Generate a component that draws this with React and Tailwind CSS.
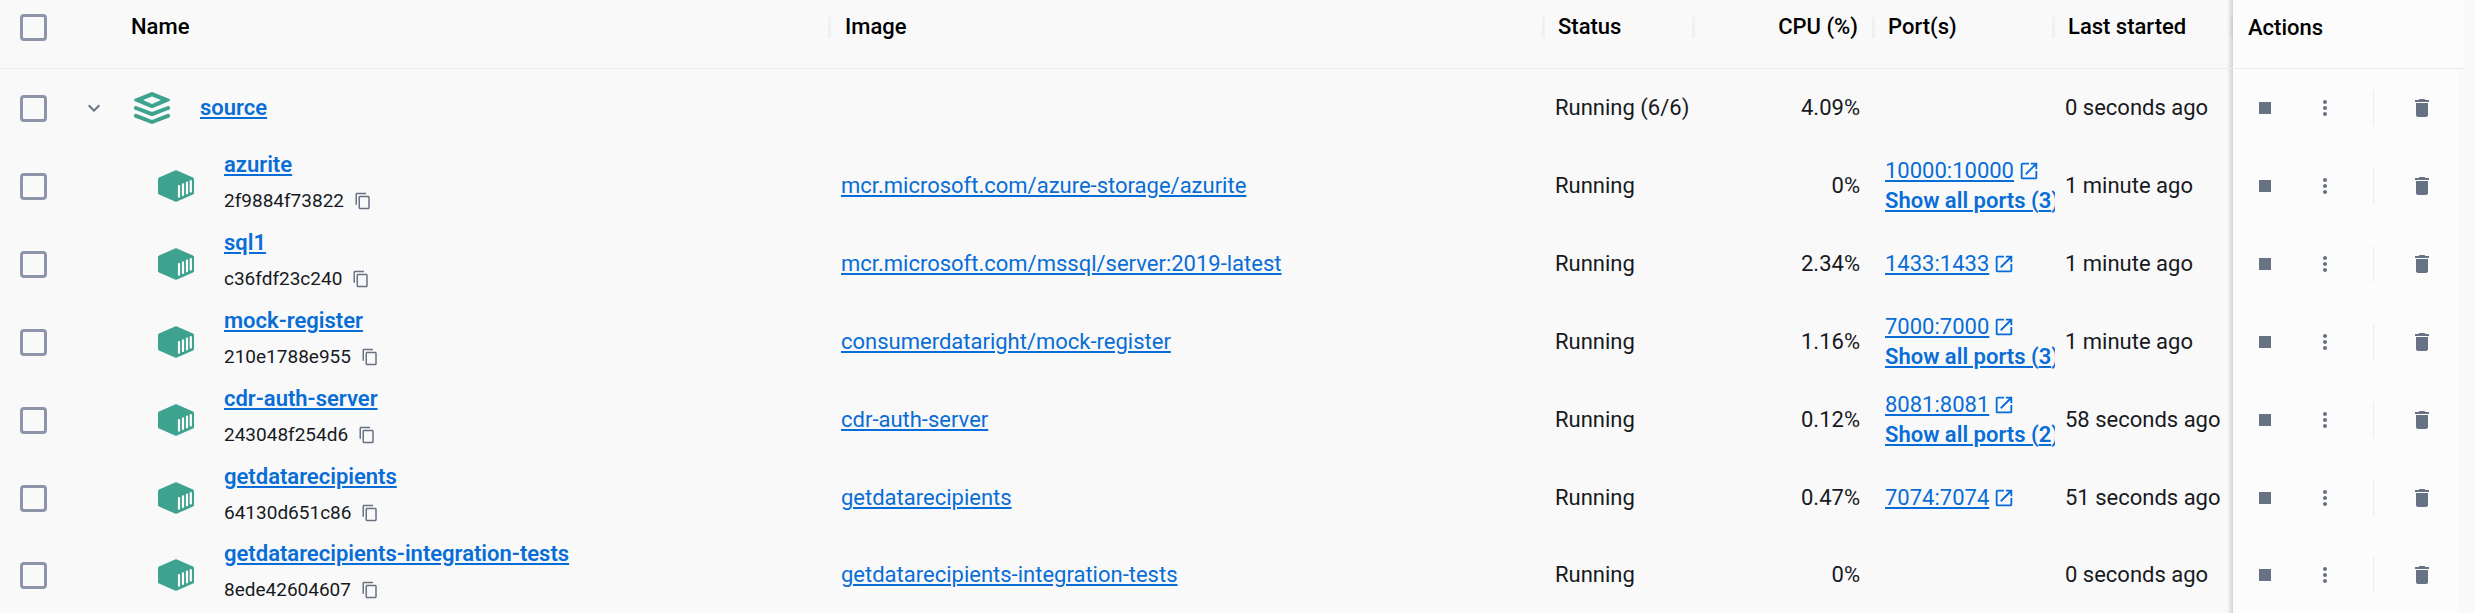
import { MdContentCopy, MdDelete, MdExpandMore, MdMoreVert, MdOpenInNew, MdStop } from "react-icons/md";

const containers = [
  { name: "azurite", id: "2f9884f73822", image: "mcr.microsoft.com/azure-storage/azurite", cpu: "0%", port: "10000:10000", more: 3, started: "1 minute ago" },
  { name: "sql1", id: "c36fdf23c240", image: "mcr.microsoft.com/mssql/server:2019-latest", cpu: "2.34%", port: "1433:1433", started: "1 minute ago" },
  { name: "mock-register", id: "210e1788e955", image: "consumerdataright/mock-register", cpu: "1.16%", port: "7000:7000", more: 3, started: "1 minute ago" },
  { name: "cdr-auth-server", id: "243048f254d6", image: "cdr-auth-server", cpu: "0.12%", port: "8081:8081", more: 2, started: "58 seconds ago" },
  { name: "getdatarecipients", id: "64130d651c86", image: "getdatarecipients", cpu: "0.47%", port: "7074:7074", started: "51 seconds ago" },
  { name: "getdatarecipients-integration-tests", id: "8ede42604607", image: "getdatarecipients-integration-tests", cpu: "0%", started: "0 seconds ago" },
];

function StackIcon() {
  return (
    <svg viewBox="0 0 36 32" className="h-8 w-9 shrink-0 text-[#3da28e]" aria-hidden="true">
      <path
        fill="currentColor"
        fillRule="evenodd"
        d="M16.6.4q1.4-.6 2.8 0L35 6.8q2 1.2 0 2.4l-15.600 6.600q-1.400.6-2.800 0L1 9.200q-2-1.200 0-2.400ZM18 4.600 9 8l9 4 9-4Z"
      />
      <path
        fill="none"
        stroke="currentColor"
        strokeWidth="4"
        strokeLinejoin="round"
        strokeLinecap="round"
        d="M2 16l16 6.200L34 16M2 23.800 18 30l16-6.200"
      />
    </svg>
  );
}

function ContainerIcon() {
  return (
    <svg viewBox="0 0 36 32" className="h-8 w-9 shrink-0" aria-hidden="true">
      <path fill="#3da28e" d="M17 .4q1-.5 2 0l16 7q1 .5 1 1.500v14.200q0 1-1 1.500l-16 7q-1 .5-2 0l-16-7q-1-.5-1-1.500V8.900q0-1 1-1.500Z" />
      <path stroke="#fff" strokeWidth="2.200" strokeLinecap="round" d="M21 16v10.700M25 14.300V25M29 12.600v10.700M32.800 11v10.600" />
    </svg>
  );
}

function Check({ label }) {
  return (
    <input
      type="checkbox"
      aria-label={label}
      className="ml-5 block h-[27px] w-[27px] appearance-none rounded-[4px] border-3 border-[#8c95a9] checked:bg-[#8c95a9]"
    />
  );
}

function Head({ children, className = "" }) {
  return (
    <th scope="col" className="border-b border-[#ececee] p-0 pb-3.5 font-medium">
      <div className={`flex h-[21px] items-center border-r-3 border-[#eff0f2] ${className}`}>{children}</div>
    </th>
  );
}

const panel =
  "relative bg-[#fcfcfc] p-0 before:absolute before:inset-y-0 before:right-full before:w-1.5 before:bg-linear-to-l before:from-black/15 before:to-transparent";

function Actions({ name }) {
  return (
    <>
      <td className={panel}>
        <div className="flex items-center pl-5 text-2xl text-[#677285]">
          <button type="button" aria-label={`Stop ${name}`}><MdStop /></button>
          <button type="button" aria-label={`More actions for ${name}`} className="ml-9"><MdMoreVert /></button>
          <span className="ml-9 h-9 w-px bg-[#ececee]" />
          <button type="button" aria-label={`Delete ${name}`} className="ml-9"><MdDelete /></button>
        </div>
      </td>
      <td className="p-0" />
    </>
  );
}

const link = "text-[#086dd7] underline";

export default function App() {
  return (
    <main className="min-h-screen bg-[#f9f9f9] pr-[11px] font-['Roboto',sans-serif] text-[22px] leading-[30px] text-[#17191e]">
      <table className="w-full min-w-[1500px] table-fixed border-separate border-spacing-0 text-left whitespace-nowrap">
        <colgroup>
          <col className="w-[68px]" />
          <col className="w-[49px]" />
          <col />
          <col />
          <col className="w-[150px]" />
          <col className="w-[180px]" />
          <col className="w-[180px]" />
          <col className="w-[178px]" />
          <col className="w-[225px]" />
          <col className="w-[6px]" />
        </colgroup>
        <thead className="text-black">
          <tr className="h-[69px]">
            <th className="border-b border-[#ececee] p-0 pb-3.5"><Check label="Select all containers" /></th>
            <th className="border-b border-[#ececee] p-0" />
            <Head className="pl-3.5">Name</Head>
            <Head className="pl-3.5">Image</Head>
            <Head className="pl-[13px]">Status</Head>
            <Head className="justify-end pr-3.5">CPU (%)</Head>
            <Head className="pl-[13px]">Port(s)</Head>
            <Head className="pl-[13px]">Last started</Head>
            <th scope="col" colSpan={2} className={`${panel} border-b border-[#ececee]`}>
              <div className="pb-3 pl-[15px] font-medium">Actions</div>
            </th>
          </tr>
        </thead>
        <tbody>
          <tr className="h-[78px]">
            <td className="p-0"><Check label="Select source" /></td>
            <td className="p-0">
              <button type="button" aria-label="Collapse source" className="ml-3.5 block text-2xl text-[#677285]"><MdExpandMore /></button>
            </td>
            <td className="p-0">
              <div className="flex items-center gap-[30px] pl-[17px]">
                <StackIcon />
                <a href="#source" className={`${link} font-semibold`}>source</a>
              </div>
            </td>
            <td className="p-0" />
            <td className="p-0 pl-2.5">Running (6/6)</td>
            <td className="p-0 pr-[15px] text-right">4.09%</td>
            <td className="p-0" />
            <td className="p-0 pl-2.5">0 seconds ago</td>
            <Actions name="source" />
          </tr>
          {containers.map((c) => (
            <tr key={c.id} className="h-[78px] last:h-[76px]">
              <td className="p-0"><Check label={`Select ${c.name}`} /></td>
              <td className="p-0" />
              <td className="p-0">
                <div className="flex items-center gap-[30px] pl-[41px]">
                  <ContainerIcon />
                  <div className="pb-0.5">
                    <div className="leading-8"><a href={`#${c.name}`} className={`${link} font-semibold`}>{c.name}</a></div>
                    <div className="flex h-10 items-center gap-2.5 text-[19px]">
                      {c.id}
                      <button type="button" aria-label={`Copy id of ${c.name}`} className="text-lg text-[#677285]"><MdContentCopy /></button>
                    </div>
                  </div>
                </div>
              </td>
              <td className="p-0 pl-2.5"><a href={`#image-${c.name}`} className={link}>{c.image}</a></td>
              <td className="p-0 pl-2.5">Running</td>
              <td className="p-0 pr-[15px] text-right">{c.cpu}</td>
              <td className="p-0 pl-2.5">
                <div className="overflow-hidden">
                  {c.port && (
                    <div className="flex items-center gap-1 text-[#086dd7]">
                      <a href={`#port-${c.name}`} className={link}>{c.port}</a>
                      <MdOpenInNew className="text-[22px]" />
                    </div>
                  )}
                  {c.more && <a href={`#ports-${c.name}`} className={`${link} block font-semibold`}>Show all ports ({c.more})</a>}
                </div>
              </td>
              <td className="p-0 pl-2.5">{c.started}</td>
              <Actions name={c.name} />
            </tr>
          ))}
        </tbody>
      </table>
    </main>
  );
}
